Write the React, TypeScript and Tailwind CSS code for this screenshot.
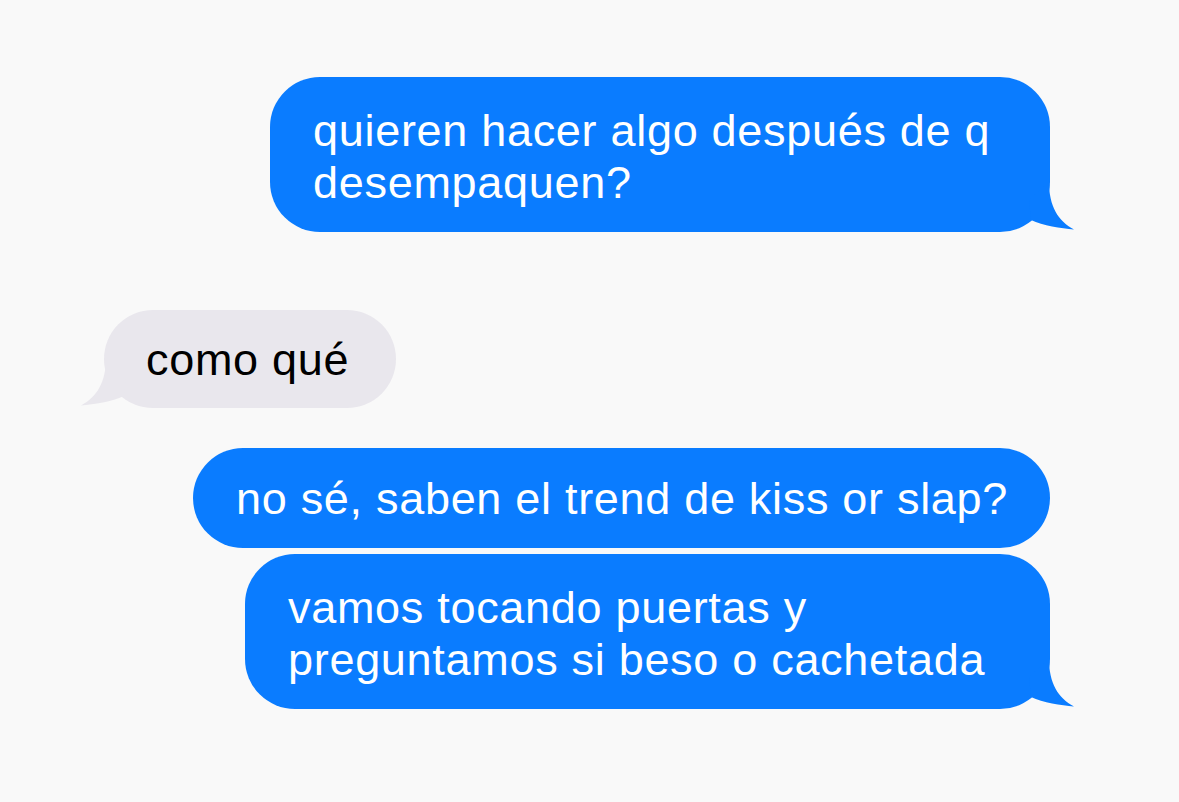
import React from "react";

const BLUE = "#0a7cff";

function Tail({ side, color }: { side: "left" | "right"; color: string }) {
  return (
    <svg
      width="46"
      height="50"
      viewBox="0 0 46 50"
      className={`absolute bottom-0 ${side === "right" ? "-right-[25px]" : "-left-[24px] -scale-x-100"}`}
    >
      <path d="M20 0 C20 24 29 39 45 47.5 C32 46 14 44 2 38 L0 18 Z" fill={color} />
    </svg>
  );
}

const Sent: React.FC<{ width: string; pad: string; tail?: boolean; children: React.ReactNode }> = ({
  width,
  pad,
  tail,
  children,
}) => (
  <div className={`relative self-end mr-[129px] ${width}`}>
    <div className={`rounded-[50px] bg-[#0a7cff] pl-[43px] pr-[30px] text-white ${pad}`}>{children}</div>
    {tail && <Tail side="right" color={BLUE} />}
  </div>
);

export default function App() {
  return (
    <div
      className="min-h-[802px] w-full bg-[#f9f9f9] flex flex-col pt-[77px] text-[45px] leading-[52px] tracking-[0.7px]"
      style={{ fontFamily: '"Liberation Sans", Arial, sans-serif' }}
    >
      <Sent width="w-[780px]" pad="pt-[28px] pb-[23px]" tail>
        quieren hacer algo después de q
        <br />
        desempaquen?
      </Sent>

      <div className="relative self-start ml-[104px] mt-[78px] w-[292px]">
        <div className="rounded-[50px] bg-[#e9e7ed] pl-[42px] pt-[24px] pb-[22px] text-black">como qué</div>
        <Tail side="left" color="#e9e7ed" />
      </div>

      <div className="mt-[40px] flex flex-col gap-[6px]">
        <Sent width="w-[857px]" pad="pt-[25px] pb-[23px]">
          no sé, saben el trend de kiss or slap?
        </Sent>
        <Sent width="w-[805px]" pad="pt-[28px] pb-[23px]" tail>
          vamos tocando puertas y
          <br />
          preguntamos si beso o cachetada
        </Sent>
      </div>
    </div>
  );
}
